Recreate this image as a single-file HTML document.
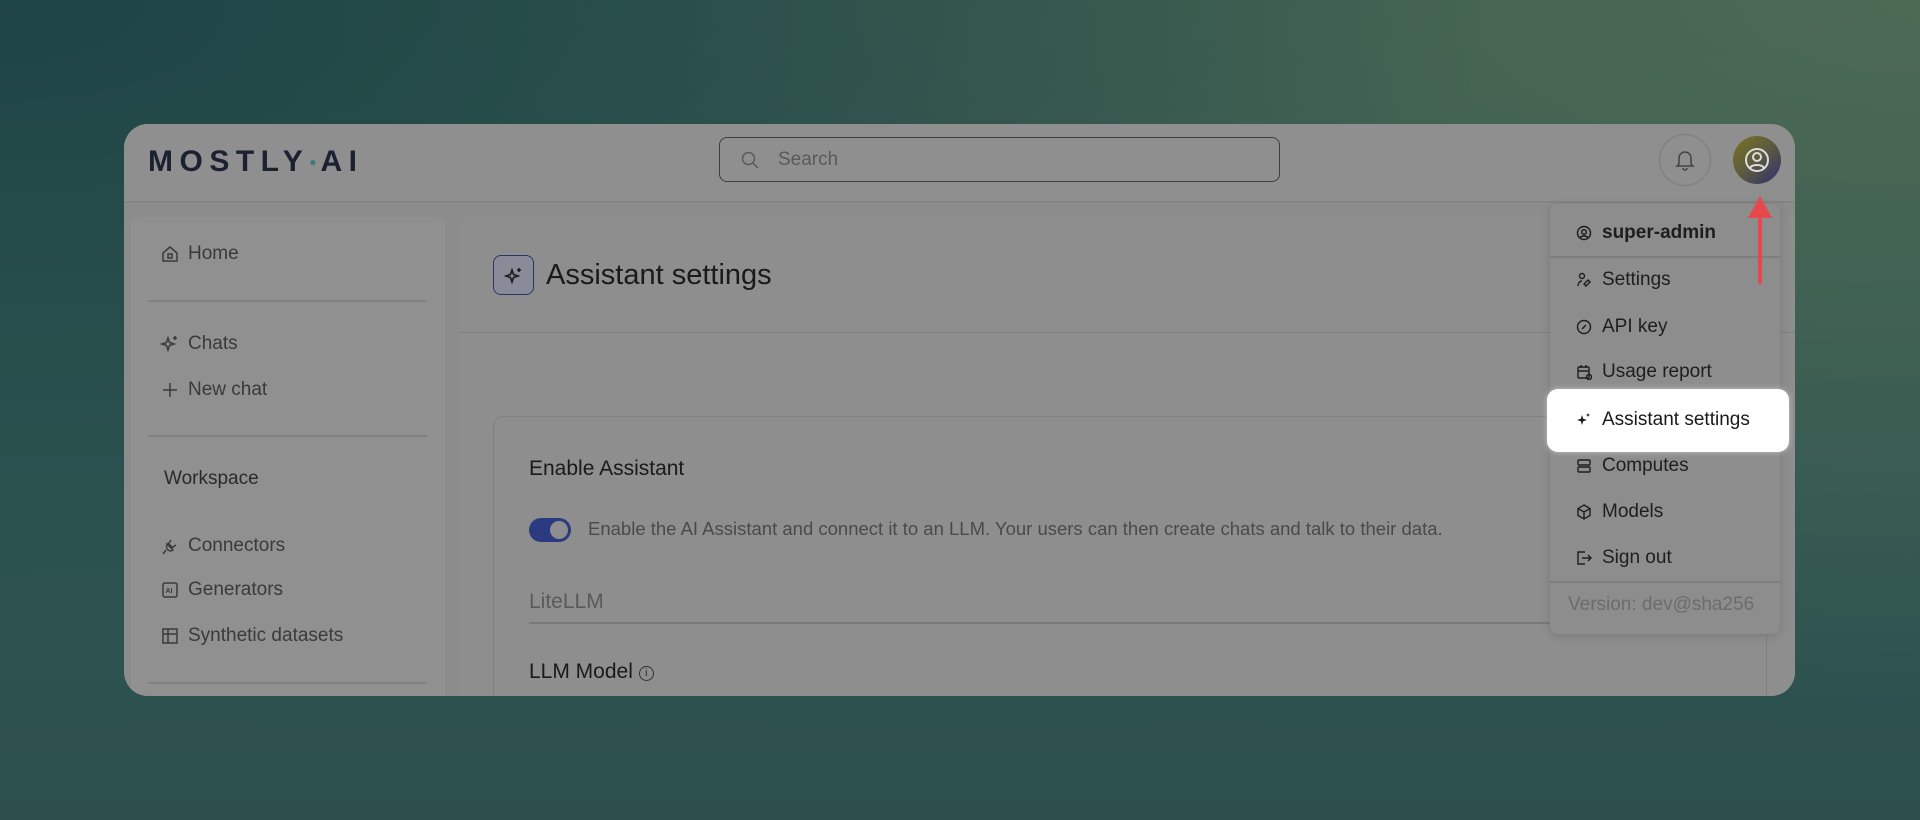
<!DOCTYPE html>
<html><head><meta charset="utf-8"><style>
*{box-sizing:border-box;margin:0;padding:0}
body{width:1920px;height:820px;overflow:hidden;font-family:"Liberation Sans",sans-serif;
background:radial-gradient(ellipse at 0% 0%,#1d4446 0%,transparent 55%),radial-gradient(ellipse at 100% 0%,#4c6a54 0%,transparent 60%),linear-gradient(180deg,#35574f 0%,#2f5552 60%,#2c4f4c 100%);position:relative}
.win{position:absolute;left:124px;top:124px;width:1671px;height:572px;background:#8c8c8c;border-radius:24px;overflow:hidden}
.hdr{position:absolute;left:0;top:0;width:100%;height:79px;background:#8f8f8f;border-bottom:2px solid #848484}
.logo{position:absolute;left:24px;top:21px;font-size:30px;font-weight:bold;letter-spacing:6.5px;color:#1b2130}
.search{position:absolute;left:595px;top:13px;width:561px;height:45px;border:1.5px solid #3e3e3e;border-radius:8px}
.search span{position:absolute;left:58px;top:11px;font-size:19px;color:#5a5a5a}
.bell{position:absolute;left:1535px;top:10px;width:52px;height:52px;border:1.5px solid #7c7c7c;border-radius:50%}
.av{position:absolute;left:1609px;top:12px;width:48px;height:48px;border-radius:50%;background:linear-gradient(135deg,#7a7420 0%,#5c5a40 50%,#2c2f70 100%)}
.side{position:absolute;left:7px;top:93px;width:314px;height:500px;background:#909090;border-radius:10px}
.it{position:absolute;left:29px;font-size:19px;color:#3a3a3a;display:flex;align-items:center;gap:8px}
.it svg{width:20px;height:20px}
.dv{position:absolute;left:17px;width:279px;height:1.5px;background:#818181}
.main{position:absolute;left:335px;top:93px;width:1400px;height:500px;background:#8e8e8e;border-radius:10px}
.mh{position:absolute;left:0;top:0;width:100%;height:116px;border-bottom:1.5px solid #818181}
.ticon{position:absolute;left:34px;top:38px;width:41px;height:40px;border:1.5px solid #2e3366;border-radius:8px;background:#8a8b99}
.title{position:absolute;left:87px;top:42px;font-size:29px;color:#1a1a1a}
.card{position:absolute;left:34px;top:199px;width:1274px;height:400px;border:1.5px solid #818181;border-radius:10px}
.dd{position:absolute;left:1550px;top:204px;width:230px;height:430px;background:#8d8d8d;border-radius:8px;box-shadow:0 2px 10px rgba(0,0,0,.15)}
.di{position:absolute;left:26px;font-size:19px;color:#1e1e1e;display:flex;align-items:center;gap:10px}
.di svg{width:16px;height:16px}
.hl{position:absolute;left:1547px;top:389px;width:242px;height:63px;background:#fff;border-radius:11px;box-shadow:0 0 6px rgba(255,255,255,.5)}
</style></head><body>
<div class="win">
 <div class="hdr">
  <div class="logo">MOSTLY<span style="color:#3d7a7a;font-size:12px;vertical-align:5px;letter-spacing:4px">●</span>AI</div>
  <div class="search"><svg style="position:absolute;left:20px;top:12px" width="20" height="20" viewBox="0 0 20 20" fill="none" stroke="#5a5a5a" stroke-width="1.5"><circle cx="8.5" cy="8.5" r="6"/><path d="M13 13l5 5"/></svg><span>Search</span></div>
  <div class="bell"><svg style="position:absolute;left:15px;top:14px" width="20" height="22" viewBox="0 0 20 22" fill="none" stroke="#444" stroke-width="1.5"><path d="M4 15V9a6 6 0 0112 0v6l2 2H2z"/><path d="M8 19a2 2 0 004 0"/></svg></div>
  <div class="av"><svg style="position:absolute;left:11px;top:11px" width="26" height="26" viewBox="0 0 26 26" fill="none" stroke="#ddd" stroke-width="2"><circle cx="13" cy="13" r="11"/><circle cx="13" cy="10" r="4"/><path d="M6 21c2-4 12-4 14 0"/></svg></div>
 </div>
 <div class="side">
  <div class="it" style="top:26px"><svg viewBox="0 0 20 20" fill="none" stroke="#3a3a3a" stroke-width="1.5"><path d="M3 9l7-6 7 6v8H3z"/><rect x="8" y="10" width="4" height="4"/></svg>Home</div>
  <div class="dv" style="top:83px"></div>
  <div class="it" style="top:116px"><svg viewBox="0 0 20 20" fill="none" stroke="#3a3a3a" stroke-width="1.5"><path d="M8 4l1.5 4.5L14 10l-4.5 1.5L8 16l-1.5-4.5L2 10l4.5-1.5z"/><path d="M15 2v4M13 4h4"/></svg>Chats</div>
  <div class="it" style="top:162px"><svg viewBox="0 0 20 20" fill="none" stroke="#3a3a3a" stroke-width="1.5"><path d="M10 3v14M3 10h14"/></svg>New chat</div>
  <div class="dv" style="top:218px"></div>
  <div class="it" style="top:251px;left:33px;color:#2a2a2a">Workspace</div>
  <div class="it" style="top:318px"><svg viewBox="0 0 20 20" fill="none" stroke="#3a3a3a" stroke-width="1.5"><path d="M6 14l-3 4M8 7l5 5M11 4l-2 3M16 9l-3 2M7 9a4 4 0 006 5l-6-6z"/></svg>Connectors</div>
  <div class="it" style="top:362px"><svg viewBox="0 0 20 20" fill="none" stroke="#3a3a3a" stroke-width="1.5"><rect x="3" y="3" width="14" height="14" rx="2"/><text x="5.5" y="13" font-size="7" font-weight="bold" fill="#3a3a3a" stroke="none">AI</text></svg>Generators</div>
  <div class="it" style="top:408px"><svg viewBox="0 0 20 20" fill="none" stroke="#3a3a3a" stroke-width="1.5"><rect x="3" y="3" width="14" height="14"/><path d="M3 8h14M8 3v14"/></svg>Synthetic datasets</div>
  <div class="dv" style="top:465px"></div>
 </div>
 <div class="main">
  <div class="mh"><div class="ticon"><svg style="position:absolute;left:10px;top:10px" width="20" height="20" viewBox="0 0 20 20" fill="none" stroke="#1a1a1a" stroke-width="1.6"><path d="M8 4l1.5 4.5L14 10l-4.5 1.5L8 16l-1.5-4.5L2 10l4.5-1.5z"/><path d="M15 2v4M13 4h4"/></svg></div><div class="title">Assistant settings</div></div>
  <div class="card">
   <div style="position:absolute;left:35px;top:40px;font-size:21px;color:#1a1a1a">Enable Assistant</div>
   <div style="position:absolute;left:35px;top:101px;width:42px;height:24px;border-radius:12px;background:#2c3a80"><div style="position:absolute;right:3px;top:3px;width:18px;height:18px;border-radius:50%;background:#8e8e8e"></div></div>
   <div style="position:absolute;left:94px;top:101px;font-size:18.5px;color:#4a4a4a;white-space:nowrap">Enable the AI Assistant and connect it to an LLM. Your users can then create chats and talk to their data.</div>
   <div style="position:absolute;left:35px;top:173px;font-size:21px;color:#5a5a5a">LiteLLM</div>
   <div style="position:absolute;left:35px;top:205px;width:1240px;height:1.5px;background:#7a7a7a"></div>
   <div style="position:absolute;left:35px;top:243px;font-size:21px;color:#1a1a1a">LLM Model <span style="display:inline-block;width:15px;height:15px;border:1.3px solid #333;border-radius:50%;font-size:10px;text-align:center;line-height:13px;vertical-align:2px">i</span></div>
  </div>
 </div>
</div>
<div class="dd">
 <div class="di" style="top:18px;font-weight:bold"><svg viewBox="0 0 16 16" fill="none" stroke="#1e1e1e" stroke-width="1.5"><circle cx="8" cy="8" r="6.5"/><circle cx="8" cy="7" r="2.3"/><path d="M4 12.5c2-2 6-2 8 0"/></svg>super-admin</div>
 <div style="position:absolute;left:0;top:52px;width:100%;height:1.5px;background:#7e7e7e"></div>
 <div class="di" style="top:65px"><svg viewBox="0 0 16 16" fill="none" stroke="#1e1e1e" stroke-width="1.4"><circle cx="6" cy="4" r="2.5"/><path d="M2 14c0-3 2-5 4-5M10 14l4-4-2-2-4 4z"/></svg>Settings</div>
 <div class="di" style="top:112px"><svg viewBox="0 0 16 16" fill="none" stroke="#1e1e1e" stroke-width="1.4"><circle cx="8" cy="8" r="6.5"/><path d="M6 10l4-4"/></svg>API key</div>
 <div class="di" style="top:157px"><svg viewBox="0 0 16 16" fill="none" stroke="#1e1e1e" stroke-width="1.4"><rect x="2" y="3" width="11" height="11" rx="1"/><path d="M2 7h11M5 1v3M10 1v3"/><circle cx="13" cy="13" r="2.5"/></svg>Usage report</div>
 <div class="di" style="top:251px"><svg viewBox="0 0 16 16" fill="none" stroke="#1e1e1e" stroke-width="1.4"><rect x="2" y="2" width="12" height="5" rx="1"/><rect x="2" y="9" width="12" height="5" rx="1"/></svg>Computes</div>
 <div class="di" style="top:297px"><svg viewBox="0 0 16 16" fill="none" stroke="#1e1e1e" stroke-width="1.4"><path d="M8 1l6 3.5v7L8 15l-6-3.5v-7zM2 4.5L8 8l6-3.5M8 8v7"/></svg>Models</div>
 <div class="di" style="top:343px"><svg viewBox="0 0 16 16" fill="none" stroke="#1e1e1e" stroke-width="1.4"><path d="M9 2H2v12h7M6 8h9M12 5l3 3-3 3"/></svg>Sign out</div>
 <div style="position:absolute;left:0;top:377px;width:100%;height:1.5px;background:#7e7e7e"></div>
 <div class="di" style="top:390px;left:18px;color:#6c6c6c">Version: dev@sha256</div>
</div>
<div class="hl"><div class="di" style="top:20px;left:29px;color:#1a1a1a"><svg viewBox="0 0 16 16" fill="#1a1a1a"><path d="M6 3l1.2 3.8L11 8l-3.8 1.2L6 13l-1.2-3.8L1 8l3.8-1.2z"/><path d="M12 1l.6 1.4L14 3l-1.4.6L12 5l-.6-1.4L10 3l1.4-.6z"/></svg>Assistant settings</div></div>
<svg style="position:absolute;left:1745px;top:194px" width="30" height="92" viewBox="0 0 30 92"><path d="M15 18L15 88" stroke="#e5484d" stroke-width="4" stroke-linecap="round"/><path d="M15 2L3 24h24z" fill="#e5484d"/></svg>
</body></html>
